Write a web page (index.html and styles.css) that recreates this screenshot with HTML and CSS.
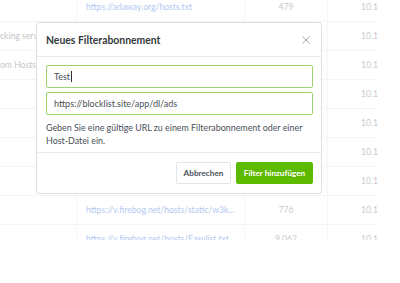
FILE: index.html
```html
<!DOCTYPE html>
<html lang="de">
<head>
<meta charset="utf-8">
<link rel="stylesheet" href="styles.css">
<title>Neues Filterabonnement</title>
</head>
<body>
<div class="page">
  <div class="table-wrap">
    <div class="table">
      <div class="row">
        <div class="c1"></div>
        <div class="c2 link">https://adaway.org/hosts.txt</div>
        <div class="c3">479</div>
        <div class="c4">10.12.2019, 14:03</div>
      </div>
      <div class="row">
        <div class="c1 name">cking servers</div>
        <div class="c2"></div>
        <div class="c3"></div>
        <div class="c4">10.12.2019, 14:03</div>
      </div>
      <div class="row">
        <div class="c1 name">om Hosts</div>
        <div class="c2"></div>
        <div class="c3"></div>
        <div class="c4">10.12.2019, 14:03</div>
      </div>
      <div class="row">
        <div class="c1"></div><div class="c2"></div><div class="c3"></div>
        <div class="c4">10.12.2019, 14:03</div>
      </div>
      <div class="row">
        <div class="c1"></div><div class="c2"></div><div class="c3"></div>
        <div class="c4">10.12.2019, 14:03</div>
      </div>
      <div class="row">
        <div class="c1"></div><div class="c2"></div><div class="c3"></div>
        <div class="c4">10.12.2019, 14:03</div>
      </div>
      <div class="row">
        <div class="c1"></div><div class="c2"></div><div class="c3"></div>
        <div class="c4">10.12.2019, 14:03</div>
      </div>
      <div class="row">
        <div class="c1"></div>
        <div class="c2 link">https://v.firebog.net/hosts/static/w3k...</div>
        <div class="c3">776</div>
        <div class="c4">10.12.2019, 14:03</div>
      </div>
      <div class="row">
        <div class="c1"></div>
        <div class="c2 link">https://v.firebog.net/hosts/Easylist.txt</div>
        <div class="c3">9 062</div>
        <div class="c4">10.12.2019, 14:03</div>
      </div>
    </div>
  </div>

  <div class="modal">
    <div class="modal-header">
      <h4 class="modal-title">Neues Filterabonnement</h4>
      <span class="close">
        <svg width="8" height="8" viewBox="0 0 8 8"><path d="M0.5 0.5 L7.5 7.5 M7.5 0.5 L0.5 7.5" stroke="#a0a6b0" stroke-width="1" fill="none"/></svg>
      </span>
    </div>
    <div class="modal-body">
      <div class="input">Test<span class="caret"></span></div>
      <div class="input">https://blocklist.site/app/dl/ads</div>
      <p class="help">Geben Sie eine gültige URL zu einem Filterabonnement oder einer Host-Datei ein.</p>
    </div>
    <div class="modal-footer">
      <button class="btn btn-secondary">Abbrechen</button>
      <button class="btn btn-success">Filter hinzufügen</button>
    </div>
  </div>
</div>
</body>
</html>
```

FILE: styles.css
```css
* { box-sizing: border-box; }
html, body { margin: 0; padding: 0; background: #fff; }
body {
  font-family: Lato, "Open Sans", sans-serif;
  font-size: 8.6px;
  color: #495057;
  width: 400px;
  height: 283px;
  overflow: hidden;
}
.page { position: relative; width: 400px; height: 283px; }

.table-wrap {
  width: 378px;
  height: 240px;
  overflow: hidden;
}
.table { margin-top: -7px; }
.row {
  display: grid;
  grid-template-columns: 77px 168px 83px 50px;
  height: 29px;
  border-bottom: 1px solid #f3f4f6;
  white-space: nowrap;
}
.row > div { display: flex; align-items: center; overflow: hidden; min-width: 0; }
.c1, .c2, .c3 { border-right: 1px solid #f4f5f7; }
.c2 { padding-left: 9px; }
.c3 { justify-content: center; color: #c9cacd; }
.c4 { padding-left: 33px; color: #c9cacd; }
.name { color: #c3c5c9; }
.link { color: #b3c9f2; }

.modal {
  position: absolute;
  left: 36px;
  top: 22px;
  width: 286px;
  height: 172px;
  background: #fff;
  border: 1px solid #dcdfe3;
  border-radius: 3px;
  display: flex;
  flex-direction: column;
}
.modal-header {
  height: 34px;
  border-bottom: 1px solid #e9ecef;
  display: flex;
  align-items: center;
  justify-content: space-between;
  padding: 0 10px 0 9px;
}
.modal-title {
  margin: 0;
  font-size: 10.4px;
  font-weight: 700;
  color: #343a40;
}
.close { display: flex; width: 8px; height: 8px; margin-right: 1px; }

.modal-body {
  padding: 8px 8px 0 9px;
  height: 96px;
  border-bottom: 1px solid #e9ecef;
}
.input {
  height: 23px;
  border: 1px solid #9bd46c;
  border-radius: 2px;
  padding-left: 7px;
  display: flex;
  align-items: center;
  font-size: 9px;
  color: #495057;
  margin-bottom: 4px;
}
.caret { display: inline-block; width: 1px; height: 11px; background: #333; margin-left: 1px; }
.help {
  margin: 6px 0 0 0;
  line-height: 13px;
  font-size: 8.9px;
  color: #495057;
}

.modal-footer {
  flex: 1;
  display: flex;
  justify-content: flex-end;
  align-items: center;
  gap: 5px;
  padding: 0 8px;
}
.btn {
  height: 22px;
  font-family: inherit;
  font-size: 8.2px;
  font-weight: 700;
  border-radius: 2px;
  padding: 0;
  white-space: nowrap;
  cursor: pointer;
}
.btn-secondary { background: #fff; color: #495057; border: 1px solid #e0e5ec; width: 55px; }
.btn-success { background: #5eba00; color: #fff; border: 1px solid #5eba00; width: 77px; }
```
